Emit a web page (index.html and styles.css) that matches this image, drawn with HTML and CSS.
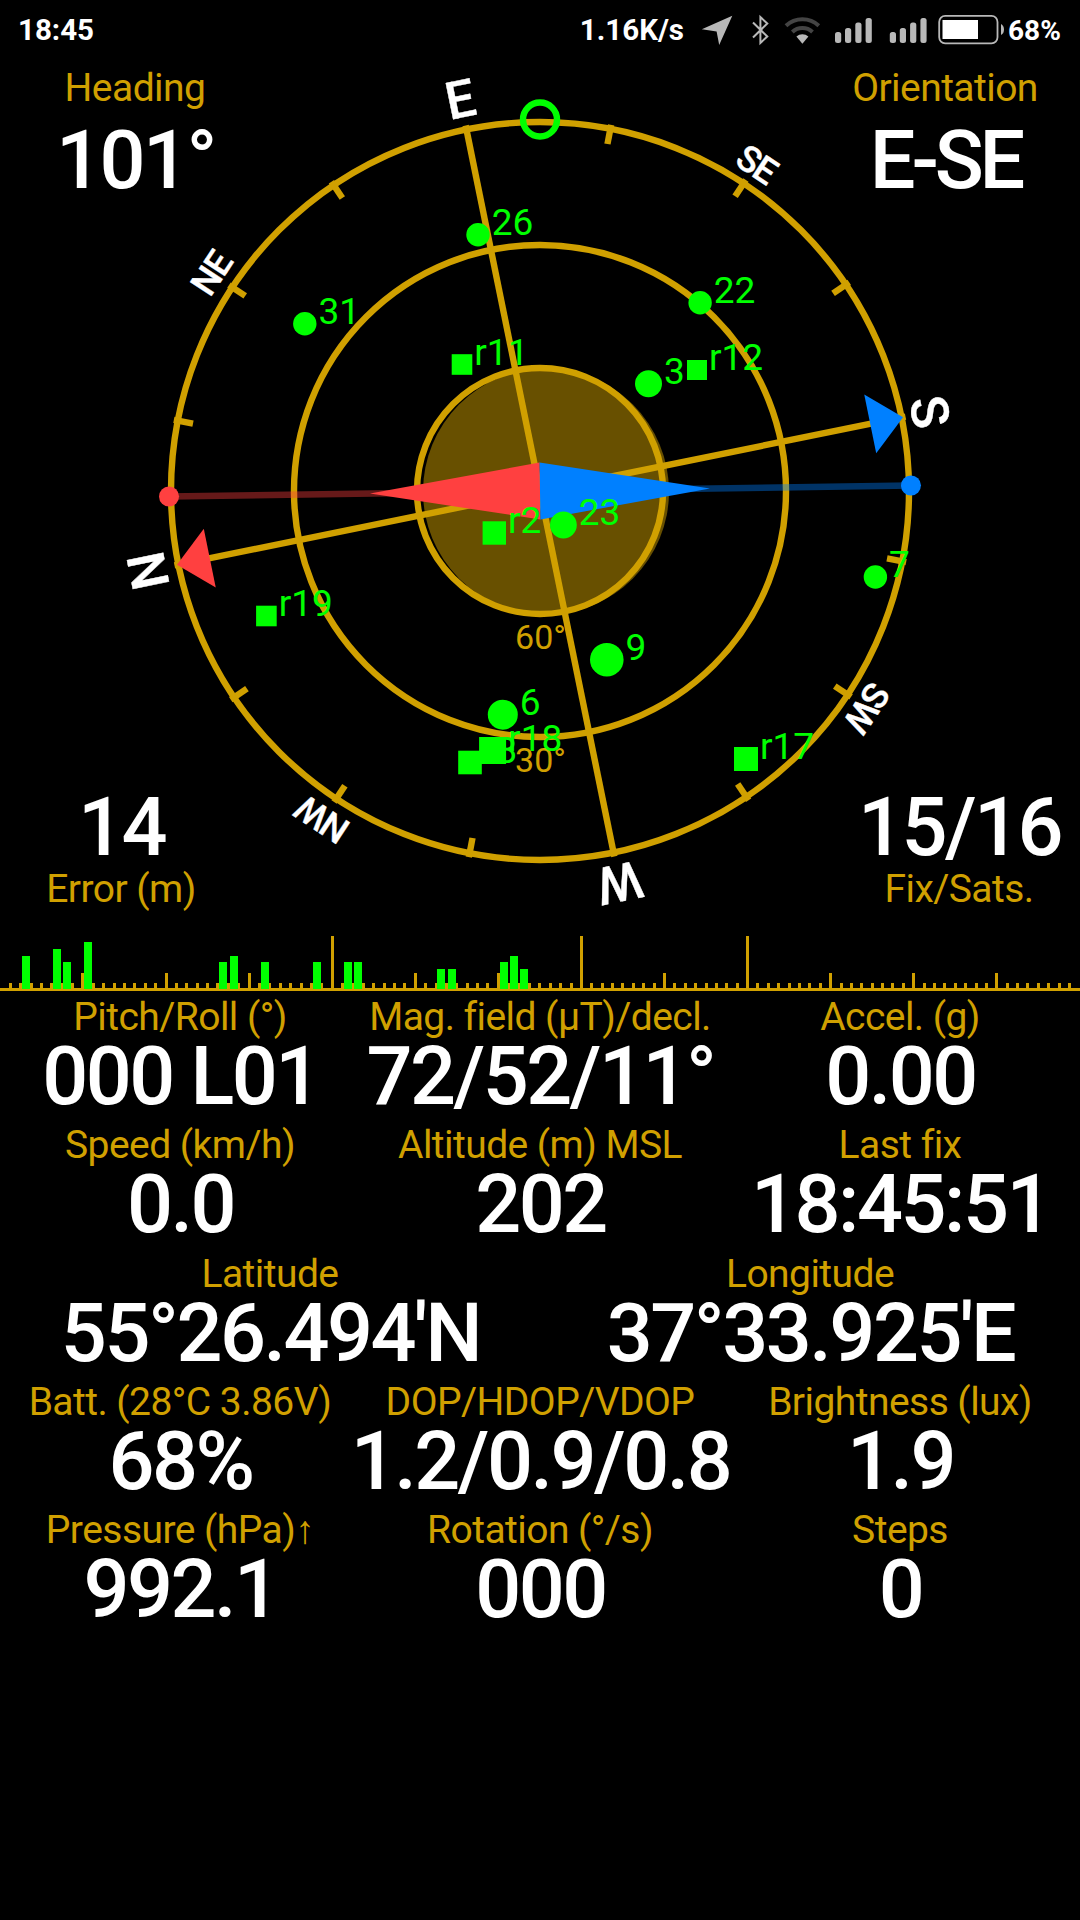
FILE: index.html
```html
<!DOCTYPE html>
<html lang="en">
<head>
    <meta charset="UTF-8">
    <meta name="viewport" content="width=device-width, initial-scale=1.0">
    <title>GPS Status</title>
    <link rel="stylesheet" href="styles.css">
</head>
<body>

    <header class="status-bar">
        <span class="clock">18:45</span>
        <span class="net-speed">1.16K/s</span>
        <svg class="status-icons" viewBox="696 0 312 54">
            <!-- Location -->
            <path class="icon" d="M732.3 15.7 L701.8 29.3 L716.6 31.6 L719.2 45 Z"/>
            <!-- Bluetooth -->
            <path class="icon-line" d="M753 22.5 L767.3 36.5 L760.4 43 V17 L767.3 23.5 L753 37.5"/>
            <!-- Wifi -->
            <path class="wifi-off" d="M786 25.8 A24 24 0 0 1 818.8 25.8"/>
            <path class="wifi-off" d="M792.3 32 A15 15 0 0 1 812.5 32"/>
            <path class="icon" d="M802.4 43.7 L796.4 36.4 A9.5 9.5 0 0 1 808.4 36.4 Z"/>
            <!-- Signal, SIM 1 and 2 -->
            <g id="sim1" class="icon">
                <rect x="835" y="32" width="6.2" height="11" rx="2.5"/>
                <rect x="845" y="28" width="6.2" height="15" rx="2.5"/>
                <rect x="855.3" y="22.5" width="6.2" height="20.5" rx="2.5"/>
                <rect x="865.6" y="18" width="6.2" height="25" rx="2.5"/>
            </g>
            <use href="#sim1" x="54.8"/>
            <!-- Battery -->
            <rect class="battery" x="939.2" y="15.9" width="58.3" height="27.4" rx="6"/>
            <rect class="battery-level" x="942.5" y="20" width="35.5" height="19"/>
            <path class="icon" d="M1001 24 Q1004 25.5 1004 29.5 Q1004 33.5 1001 35 Z"/>
        </svg>
        <span class="battery-text">68%</span>
    </header>

    <section class="sky">
        <svg class="compass" viewBox="-540 -437 1080 876">
            <circle class="pitch-disc" cx="6" cy="0.5" r="123"/>
            <circle class="ring" r="369"/>
            <circle class="ring" r="246"/>
            <circle class="ring" r="123"/>
            <g id="dial"></g>
            <text class="elevation" x="0.5" y="158">60°</text>
            <text class="elevation" x="0.5" y="280.7">30°</text>

            <!-- Magnetic needle -->
            <g transform="rotate(-0.85)">
                <line class="ray-north" x1="0" y1="0" x2="-371" y2="0"/>
                <line class="ray-south" x1="0" y1="0" x2="371" y2="0"/>
                <circle class="north" cx="-371" cy="0" r="10"/>
                <circle class="south" cx="371" cy="0" r="10"/>
                <path class="north" d="M-170 0 L0 -28.5 V28.5 Z"/>
                <path class="south" d="M170 0 L0 -28.5 V28.5 Z"/>
            </g>
            <circle class="target" cx="0" cy="-371.5" r="17"/>
            <g id="satellites"></g>
        </svg>

        <div class="corner top-left">
            <span class="label">Heading</span>
            <span class="value">101°</span>
        </div>
        <div class="corner top-right">
            <span class="label">Orientation</span>
            <span class="value direction">E-SE</span>
        </div>
        <div class="corner bottom-left">
            <span class="value">14</span>
            <span class="label">Error (m)</span>
        </div>
        <div class="corner bottom-right">
            <span class="value">15/16</span>
            <span class="label">Fix/Sats.</span>
        </div>
    </section>

    <svg class="signal-strip" id="strip" viewBox="0 0 1080 61"></svg>

    <main class="readings">
        <div class="row">
            <div class="cell"><span class="label">Pitch/Roll (°)</span><span class="value">000 L01</span></div>
            <div class="cell"><span class="label">Mag. field (µT)/decl.</span><span class="value">72/52/11°</span></div>
            <div class="cell"><span class="label">Accel. (g)</span><span class="value">0.00</span></div>
        </div>
        <div class="row">
            <div class="cell"><span class="label">Speed (km/h)</span><span class="value">0.0</span></div>
            <div class="cell"><span class="label">Altitude (m) MSL</span><span class="value">202</span></div>
            <div class="cell"><span class="label">Last fix</span><span class="value">18:45:51</span></div>
        </div>
        <div class="row">
            <div class="cell"><span class="label">Latitude</span><span class="value">55°26.494'N</span></div>
            <div class="cell"><span class="label">Longitude</span><span class="value">37°33.925'E</span></div>
        </div>
        <div class="row">
            <div class="cell"><span class="label">Batt. (28°C 3.86V)</span><span class="value">68%</span></div>
            <div class="cell"><span class="label">DOP/HDOP/VDOP</span><span class="value">1.2/0.9/0.8</span></div>
            <div class="cell"><span class="label">Brightness (lux)</span><span class="value">1.9</span></div>
        </div>
        <div class="row">
            <div class="cell"><span class="label">Pressure (hPa)↑</span><span class="value">992.1</span></div>
            <div class="cell"><span class="label">Rotation (°/s)</span><span class="value">000</span></div>
            <div class="cell"><span class="label">Steps</span><span class="value">0</span></div>
        </div>
    </main>

    <script>
        const heading = 101.5;

        // Dial: a mark every 22.5 degrees, full lines for N, E, S, W
        const names = { 0: "N", 45: "NE", 90: "E", 135: "SE", 180: "S", 225: "SW", 270: "W", 315: "NW" };
        let dial = "";
        for (let a = 0; a < 360; a += 22.5) {
            const main = a % 90 === 0;
            dial += `<g transform="rotate(${a - heading})">`;
            dial += `<line class="mark" x1="0" y1="${main ? 0 : -353.5}" x2="0" y2="-373"/>`;
            if (a === 0 || a === 180) {
                dial += `<path class="${a === 0 ? "north" : "south"}" d="M0 -370.5 L-30 -337 H30 Z"/>`;
            }
            if (names[a]) {
                const r = a > 90 && a < 270 ? 379.5 : 381.5;
                dial += `<text class="${main ? "cardinal" : "intercardinal"}" x="0" y="${-r}">${names[a]}</text>`;
            }
            dial += `</g>`;
        }
        document.getElementById("dial").innerHTML = dial;

        // name, x, y, half size (r.. = GLONASS, drawn as squares)
        const sats = [
            ["26", -62, -256.3, 11.7],
            ["31", -235.2, -167.3, 11.7],
            ["22", 160.1, -188.3, 11.7],
            ["3", 108.5, -107.3, 13.5],
            ["23", 23.4, 34, 13.4],
            ["9", 66.8, 168.7, 16.8],
            ["6", -37.2, 223.7, 15],
            ["7", 335.4, 86, 11.7],
            ["r11", -78, -126.5, 10.3],
            ["r12", 157, -121, 10],
            ["r2", -45.7, 42, 11.7],
            ["r19", -273.6, 125, 10.3],
            ["r8", -70, 271.5, 11.8],
            ["r18", -47.4, 259.5, 13.5],
            ["r17", 206, 268, 12]
        ];
        document.getElementById("satellites").innerHTML = sats.map(([name, x, y, r]) => {
            const shape = name[0] === "r"
                ? `<rect x="${x - r}" y="${y - r}" width="${r * 2}" height="${r * 2}"/>`
                : `<circle cx="${x}" cy="${y}" r="${r}"/>`;
            return shape + `<text x="${x + r + 2}" y="${y + 0.3}">${name}</text>`;
        }).join("");

        // Signal strip: 104 slots, long marks between satellite systems
        const slot = 1080 / 104;
        const levels = {
            3: 33, 6: 40, 7: 27, 9: 47, 22: 27, 23: 33, 26: 27, 31: 27,
            34: 27, 35: 27, 43: 20, 44: 20, 49: 27, 50: 33, 51: 20
        };
        let strip = "";
        for (let i = 1; i < 104; i++) {
            const h = [32, 56, 72].includes(i) ? 52 : i % 8 === 0 ? 15 : 5;
            strip += `<rect class="tick" x="${Math.round(i * slot - 1.6)}" y="${58 - h}" width="3" height="${h}"/>`;
        }
        strip += `<rect class="tick" x="0" y="58" width="1080" height="3"/>`;
        for (const n in levels) {
            strip += `<rect class="bar" x="${Math.round((n - 0.5) * slot - 4.1)}" y="${59 - levels[n]}" width="8" height="${levels[n]}"/>`;
        }
        document.getElementById("strip").innerHTML = strip;
    </script>
</body>
</html>
```
FILE: styles.css
```css
body {
    margin: 0;
    background-color: #000;
    color: #fff;
    font-family: Roboto, "Liberation Sans", sans-serif;
    overflow: hidden;
}

svg {
    display: block;
}

/* Status bar */
.status-bar {
    display: flex;
    align-items: flex-start;
    height: 54px;
    padding: 0 19px 0 18px;
    line-height: 61px;
    font-size: 29.5px;
    font-weight: 700;
}
.clock {
    margin-right: auto;
}
.net-speed {
    margin-right: 12px;
}
.status-icons {
    width: 312px;
    height: 54px;
}
.battery-text {
    width: 53px;
    font-size: 28px;
    white-space: nowrap;
}
.icon { fill: #b8b8b8; }
.icon-line {
    fill: none;
    stroke: #b8b8b8;
    stroke-width: 2;
}
.wifi-off {
    fill: none;
    stroke: #444;
    stroke-width: 4;
}
.battery {
    fill: none;
    stroke: #b8b8b8;
    stroke-width: 1.8;
}
.battery-level { fill: #fff; }

/* Compass with a reading in each corner */
.sky {
    display: grid;
    grid-template-columns: auto 1fr auto;
    grid-template-rows: auto 1fr auto;
    height: 876px;
}
.compass {
    grid-area: 1 / 1 / 4 / 4;
    width: 1080px;
    height: 876px;
}
.corner {
    display: flex;
    flex-direction: column;
    align-items: center;
}
.top-left, .top-right {
    grid-row: 1;
    width: 270px;
    padding-top: 10.5px;
}
.top-left .value, .top-right .value {
    line-height: 99.6px;
}
.bottom-left, .bottom-right {
    grid-row: 3;
    width: 242px;
    padding-bottom: 18.5px;
}
.bottom-left .value, .bottom-right .value {
    line-height: 76px;
}
.top-left, .bottom-left {
    grid-column: 1;
    justify-self: start;
}
.top-right, .bottom-right {
    grid-column: 3;
    justify-self: end;
}

.label {
    color: #d0a000;
    font-size: 39px;
    line-height: 46px;
    letter-spacing: -0.55px;
    white-space: nowrap;
}
.value {
    padding-left: 1px;
    font-size: 81px;
    font-weight: 500;
    line-height: 74px;
    letter-spacing: -2.5px;
    white-space: nowrap;
}
.direction {
    letter-spacing: -4.2px;
}

.pitch-disc { fill: #685000; }
.ring {
    fill: none;
    stroke: #d0a000;
    stroke-width: 6.4;
}
.mark {
    stroke: #d0a000;
    stroke-width: 6.4;
}
.north { fill: #ff4040; }
.south { fill: #0080ff; }
.ray-north, .ray-south {
    stroke-width: 6.6;
    opacity: 0.4;
}
.ray-north { stroke: #ff4040; }
.ray-south { stroke: #0080ff; }
.target {
    fill: none;
    stroke: #0f0;
    stroke-width: 6.4;
}
.cardinal, .intercardinal {
    fill: #fff;
    stroke: #fff;
    stroke-width: 0.4;
    font-weight: 500;
    text-anchor: middle;
}
.cardinal { font-size: 52px; }
.intercardinal {
    font-size: 36px;
    letter-spacing: -1.5px;
}
.elevation {
    fill: #d0a000;
    font-size: 34px;
    text-anchor: middle;
}
#satellites {
    fill: #0f0;
    font-size: 37px;
}

/* Signal levels */
.signal-strip {
    width: 1080px;
    height: 61px;
}
.tick { fill: #d0a000; }
.bar { fill: #0f0; }

/* Readings */
.readings {
    display: flex;
    flex-direction: column;
    gap: 8.3px;
    padding-top: 3px;
}
.row {
    display: flex;
}
.cell {
    flex: 1 1 0;
    min-width: 0;
    display: flex;
    flex-direction: column;
    align-items: center;
}
```
